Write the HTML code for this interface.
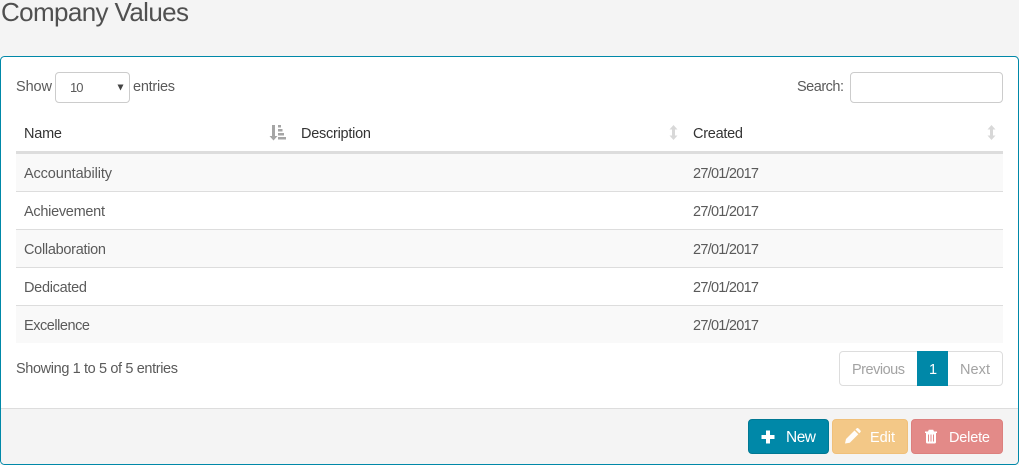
<!DOCTYPE html>
<html>
<head>
<meta charset="utf-8">
<title>Company Values</title>
<style>
html,body{margin:0;padding:0;background:#f4f4f4;width:1019px;height:465px;overflow:hidden}
svg{display:block}
text{font-family:"Liberation Sans",sans-serif;font-size:14.5px;fill:#5a5a5a}
.h{fill:#333}
</style>
</head>
<body>
<svg width="1019" height="465" viewBox="0 0 1019 465" xmlns="http://www.w3.org/2000/svg">
<rect width="1019" height="465" fill="#f4f4f4"/>
<text x="1" y="21" style="font-size:26px;fill:#505050" textLength="188" lengthAdjust="spacing">Company Values</text>

<!-- panel -->
<rect x="0.500" y="56.500" width="1018" height="408" rx="4" fill="#fff" stroke="#0088a8"/>
<path d="M1 408.500H1018V460a4 4 0 0 1-4 4H5a4 4 0 0 1-4-4Z" fill="#f4f4f4"/>
<path d="M1 408.500H1018" stroke="#ddd"/>

<!-- controls -->
<text x="16" y="91" textLength="36" lengthAdjust="spacing">Show</text>
<rect x="55.500" y="72.500" width="74" height="30" rx="3.500" fill="#fff" stroke="#ccc"/>
<text x="70" y="92" style="font-size:13px" textLength="13.500" lengthAdjust="spacing">10</text>
<path d="M117.500 84.500h6l-3 6z" fill="#444"/>
<text x="133" y="91" textLength="42" lengthAdjust="spacing">entries</text>
<text x="797" y="91" textLength="47" lengthAdjust="spacing">Search:</text>
<rect x="850.500" y="72.500" width="152" height="30" rx="3.500" fill="#fff" stroke="#ccc"/>

<!-- table head -->
<text class="h" x="24" y="138" textLength="38" lengthAdjust="spacing">Name</text>
<text class="h" x="301" y="138" textLength="70" lengthAdjust="spacing">Description</text>
<text class="h" x="693" y="138" textLength="50" lengthAdjust="spacing">Created</text>
<rect x="16" y="151" width="987" height="3" fill="#ddd"/>

<!-- sort icons -->
<g fill="#a5a5a5">
<path d="M272 125h3v11h2.500l-4 4.500-4-4.500h2.500z"/>
<rect x="278" y="125" width="3" height="2.500"/>
<rect x="278" y="129" width="4.500" height="2.500"/>
<rect x="278" y="133" width="6" height="2.500"/>
<rect x="278" y="137" width="8" height="2.500"/>
</g>
<g fill="#d8d8d8">
<path d="M673.500 125l4 4.500h-2.500v6h2.500l-4 4.500-4-4.500h2.500v-6h-2.500z"/>
<path d="M991.500 125l4 4.500h-2.500v6h2.500l-4 4.500-4-4.500h2.500v-6h-2.500z"/>
</g>

<!-- rows -->
<rect x="16" y="154" width="987" height="37" fill="#f9f9f9"/>
<rect x="16" y="230" width="987" height="37" fill="#f9f9f9"/>
<rect x="16" y="306" width="987" height="37" fill="#f9f9f9"/>
<g fill="#ddd">
<rect x="16" y="191" width="987" height="1"/>
<rect x="16" y="229" width="987" height="1"/>
<rect x="16" y="267" width="987" height="1"/>
<rect x="16" y="305" width="987" height="1"/>
</g>
<text x="24" y="178" textLength="88" lengthAdjust="spacing">Accountability</text>
<text x="24" y="216" textLength="81" lengthAdjust="spacing">Achievement</text>
<text x="24" y="254" textLength="82" lengthAdjust="spacing">Collaboration</text>
<text x="24" y="292" textLength="63" lengthAdjust="spacing">Dedicated</text>
<text x="24" y="330" textLength="66" lengthAdjust="spacing">Excellence</text>
<text x="693" y="178" textLength="66" lengthAdjust="spacing">27/01/2017</text>
<text x="693" y="216" textLength="66" lengthAdjust="spacing">27/01/2017</text>
<text x="693" y="254" textLength="66" lengthAdjust="spacing">27/01/2017</text>
<text x="693" y="292" textLength="66" lengthAdjust="spacing">27/01/2017</text>
<text x="693" y="330" textLength="66" lengthAdjust="spacing">27/01/2017</text>

<!-- info / pagination -->
<text x="16" y="373" textLength="162" lengthAdjust="spacing">Showing 1 to 5 of 5 entries</text>
<rect x="839.500" y="351.500" width="163" height="34" rx="3.500" fill="#fff" stroke="#ddd"/>
<rect x="917" y="351" width="31" height="35" fill="#0088a8"/>
<text x="852" y="374" style="fill:#a3a3a3" textLength="53" lengthAdjust="spacing">Previous</text>
<text x="929" y="374" style="fill:#fff" textLength="7" lengthAdjust="spacing">1</text>
<text x="960" y="374" style="fill:#a3a3a3" textLength="30" lengthAdjust="spacing">Next</text>

<!-- buttons -->
<rect x="748.500" y="419.500" width="80" height="34" rx="3.500" fill="#0088a8" stroke="#007893"/>
<rect x="832.500" y="419.500" width="75" height="34" rx="3.500" fill="#f3c887" stroke="#f0c07a"/>
<rect x="911.500" y="419.500" width="91" height="34" rx="3.500" fill="#e38a88" stroke="#dc807e"/>
<path d="M766 430.500h4v4.500h4.500v4H770v4.500h-4V439h-4.500v-4h4.500z" fill="#fff"/>
<path d="M845 443.500l1-4.500 8.500-8.500 3.800 3.800-8.500 8.500z M855.500 429.500l1-1a1.500 1.500 0 0 1 2 0l1.800 1.800a1.500 1.500 0 0 1 0 2l-1 1z" fill="#fff" opacity=".95"/>
<path d="M928 431.500l.8-1.800h4.400l.8 1.800h3v1.500h-1v9a1.500 1.500 0 0 1-1.500 1.500h-7a1.500 1.500 0 0 1-1.500-1.500v-9h-1v-1.500z" fill="#fff"/>
<path d="M928.500 434.500v7M931 434.500v7M933.500 434.500v7" stroke="#e38a88" stroke-width="1"/>
<text x="786" y="442" style="font-size:15.500px;fill:#fff" textLength="30" lengthAdjust="spacing">New</text>
<text x="870" y="442" style="fill:#fff" textLength="25" lengthAdjust="spacing">Edit</text>
<text x="949" y="442" style="fill:#fff" textLength="41" lengthAdjust="spacing">Delete</text>
</svg>
</body>
</html>
